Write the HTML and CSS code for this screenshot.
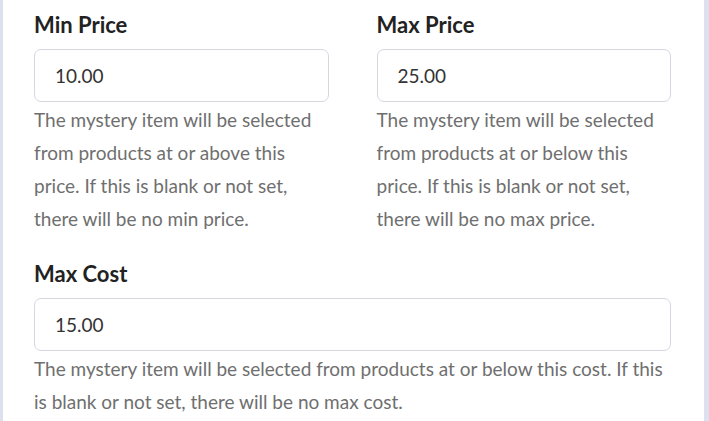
FILE: index.html
```html
<!DOCTYPE html>
<html lang="en">
<head>
    <meta charset="UTF-8">
    <meta name="viewport" content="width=device-width, initial-scale=1.0">
    <title>Mystery Item Settings</title>
    <link rel="stylesheet" href="styles.css">
</head>
<body>
    <div class="panel">
        <div class="row">
            <div class="field">
                <label class="field-label" for="minPrice">Min Price</label>
                <input class="field-input" type="text" id="minPrice" value="10.00">
                <p class="field-help">The mystery item will be selected from products at or above this price. If this is blank or not set, there will be no min price.</p>
            </div>
            <div class="field">
                <label class="field-label" for="maxPrice">Max Price</label>
                <input class="field-input" type="text" id="maxPrice" value="25.00">
                <p class="field-help">The mystery item will be selected from products at or below this price. If this is blank or not set, there will be no max price.</p>
            </div>
        </div>
        <div class="field">
            <label class="field-label" for="maxCost">Max Cost</label>
            <input class="field-input" type="text" id="maxCost" value="15.00">
            <p class="field-help">The mystery item will be selected from products at or below this cost. If this is blank or not set, there will be no max cost.</p>
        </div>
    </div>
</body>
</html>
```

FILE: styles.css
```css
body {
    font-family: Lato, "Open Sans", sans-serif;
    margin: 0;
    padding: 0;
    background-color: #dde1ef;
    height: 100vh;
    overflow: hidden;
}
.panel {
    margin: 0 5px 0 3px;
    background: #ffffff;
    height: 100vh;
    box-sizing: border-box;
    padding: 13px 33px 0 31px;
}
.row {
    display: grid;
    grid-template-columns: 1fr 1fr;
    column-gap: 48px;
    margin-bottom: 27px;
}
.field {
    display: flex;
    flex-direction: column;
}
.field-label {
    font-size: 22px;
    font-weight: 700;
    color: #222222;
    line-height: 24px;
    margin-bottom: 12px;
}
.field-input {
    height: 53px;
    box-sizing: border-box;
    border: 1px solid #d5d8e1;
    border-radius: 7px;
    padding: 0 20px;
    font-family: inherit;
    font-size: 19px;
    color: #333333;
    outline: none;
}
.field-help {
    margin: 1px 0 0;
    font-size: 19px;
    line-height: 33px;
    color: #6f6f6f;
}
```
